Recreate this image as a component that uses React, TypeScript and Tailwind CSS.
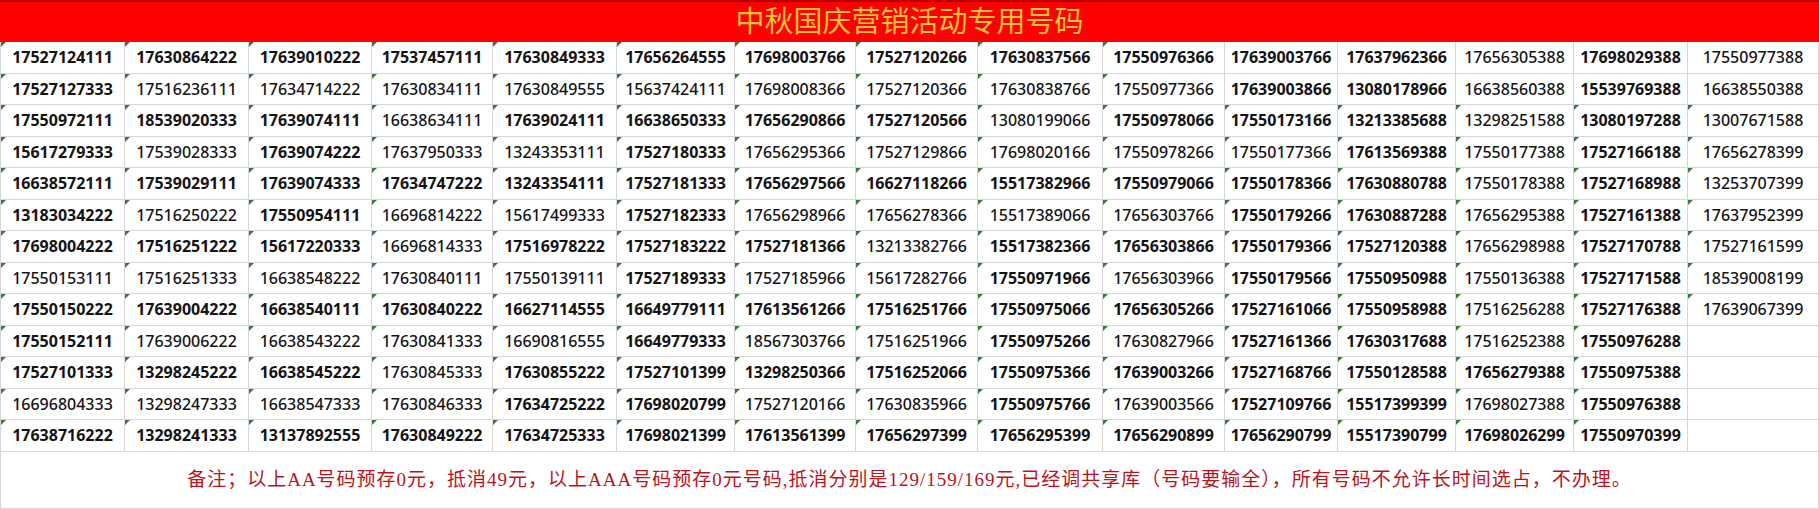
import React from 'react';

// 号码表数据（每行15列，后四行最后一列为空）
const rows: string[][] = [
  ['17527124111', '17630864222', '17639010222', '17537457111', '17630849333', '17656264555', '17698003766', '17527120266', '17630837566', '17550976366', '17639003766', '17637962366', '17656305388', '17698029388', '17550977388'],
  ['17527127333', '17516236111', '17634714222', '17630834111', '17630849555', '15637424111', '17698008366', '17527120366', '17630838766', '17550977366', '17639003866', '13080178966', '16638560388', '15539769388', '16638550388'],
  ['17550972111', '18539020333', '17639074111', '16638634111', '17639024111', '16638650333', '17656290866', '17527120566', '13080199066', '17550978066', '17550173166', '13213385688', '13298251588', '13080197288', '13007671588'],
  ['15617279333', '17539028333', '17639074222', '17637950333', '13243353111', '17527180333', '17656295366', '17527129866', '17698020166', '17550978266', '17550177366', '17613569388', '17550177388', '17527166188', '17656278399'],
  ['16638572111', '17539029111', '17639074333', '17634747222', '13243354111', '17527181333', '17656297566', '16627118266', '15517382966', '17550979066', '17550178366', '17630880788', '17550178388', '17527168988', '13253707399'],
  ['13183034222', '17516250222', '17550954111', '16696814222', '15617499333', '17527182333', '17656298966', '17656278366', '15517389066', '17656303766', '17550179266', '17630887288', '17656295388', '17527161388', '17637952399'],
  ['17698004222', '17516251222', '15617220333', '16696814333', '17516978222', '17527183222', '17527181366', '13213382766', '15517382366', '17656303866', '17550179366', '17527120388', '17656298988', '17527170788', '17527161599'],
  ['17550153111', '17516251333', '16638548222', '17630840111', '17550139111', '17527189333', '17527185966', '15617282766', '17550971966', '17656303966', '17550179566', '17550950988', '17550136388', '17527171588', '18539008199'],
  ['17550150222', '17639004222', '16638540111', '17630840222', '16627114555', '16649779111', '17613561266', '17516251766', '17550975066', '17656305266', '17527161066', '17550958988', '17516256288', '17527176388', '17639067399'],
  ['17550152111', '17639006222', '16638543222', '17630841333', '16690816555', '16649779333', '18567303766', '17516251966', '17550975266', '17630827966', '17527161366', '17630317688', '17516252388', '17550976288', ''],
  ['17527101333', '13298245222', '16638545222', '17630845333', '17630855222', '17527101399', '13298250366', '17516252066', '17550975366', '17639003266', '17527168766', '17550128588', '17656279388', '17550975388', ''],
  ['16696804333', '13298247333', '16638547333', '17630846333', '17634725222', '17698020799', '17527120166', '17630835966', '17550975766', '17639003566', '17527109766', '15517399399', '17698027388', '17550976388', ''],
  ['17638716222', '13298241333', '13137892555', '17630849222', '17634725333', '17698021399', '17613561399', '17656297399', '17656295399', '17656290899', '17656290799', '15517390799', '17698026299', '17550970399', ''],
];

// 1 = 加粗
const boldMap = [
  '111111111111010',
  '100000000011010',
  '111011110111010',
  '101001000001010',
  '111111111111010',
  '101001000011010',
  '111011101111010',
  '000001001011010',
  '111111111111010',
  '100001001011010',
  '111011111111110',
  '000011001011010',
  '111111111111110',
];

const colWidths = ['w-[124px]', 'w-[124px]', 'w-[123px]', 'w-[121px]', 'w-[124px]', 'w-[118px]', 'w-[121px]', 'w-[122px]', 'w-[125px]', 'w-[122px]', 'w-[113px]', 'w-[118px]', 'w-[118px]', 'w-[114px]', 'flex-1'];

const Cell = ({ value, bold, width, marker }: { value: string; bold: boolean; width: string; marker: boolean }) => (
  <div className={`relative flex h-full shrink-0 items-center justify-center border-r border-[#d6d6d6] ${width}`}>
    {marker && value && (
      <span className="absolute left-0 top-0 h-0 w-0 border-r-[5px] border-t-[5px] border-r-transparent border-t-[#3d7a3a]" />
    )}
    <span className={`text-[16px] leading-none text-[#141414] ${bold ? 'font-bold' : 'font-medium'}`}>{value}</span>
  </div>
);

const App = () => {
  return (
    <div className="flex h-[509px] w-[1819px] flex-col bg-white" style={{ fontFamily: '"Noto Sans", "Noto Sans CJK SC", sans-serif' }}>
      {/* 标题 */}
      <div className="flex h-[42px] shrink-0 items-center justify-center border-t-2 border-[#b80000] bg-[#ff0000]">
        <span
          className="text-[29px] leading-none text-[#f8c232]"
          style={{ fontFamily: '"Liberation Serif", "Noto Sans CJK SC", serif' }}
        >
          中秋国庆营销活动专用号码
        </span>
      </div>

      {/* 号码表 */}
      <div className="flex flex-col border-l border-[#d6d6d6]">
        {rows.map((row, r) => (
          <div key={r} className="flex h-[31.5px] border-b border-[#d6d6d6]">
            {row.map((num, c) => (
              <Cell
                key={c}
                value={num}
                bold={boldMap[r][c] === '1'}
                width={colWidths[c]}
                marker={!(r < 2 && c >= 10)}
              />
            ))}
          </div>
        ))}
      </div>

      {/* 备注 */}
      <div className="flex flex-1 items-center justify-center border-x border-b border-[#d6d6d6]">
        <p
          className="text-[19px] leading-none tracking-[1px] text-[#b8141c]"
          style={{ fontFamily: '"Liberation Serif", "Noto Sans CJK SC", serif' }}
        >
          备注；以上AA号码预存0元，抵消49元，以上AAA号码预存0元号码,抵消分别是129/159/169元,已经调共享库（号码要输全），所有号码不允许长时间选占，不办理。
        </p>
      </div>
    </div>
  );
};

export default App;
